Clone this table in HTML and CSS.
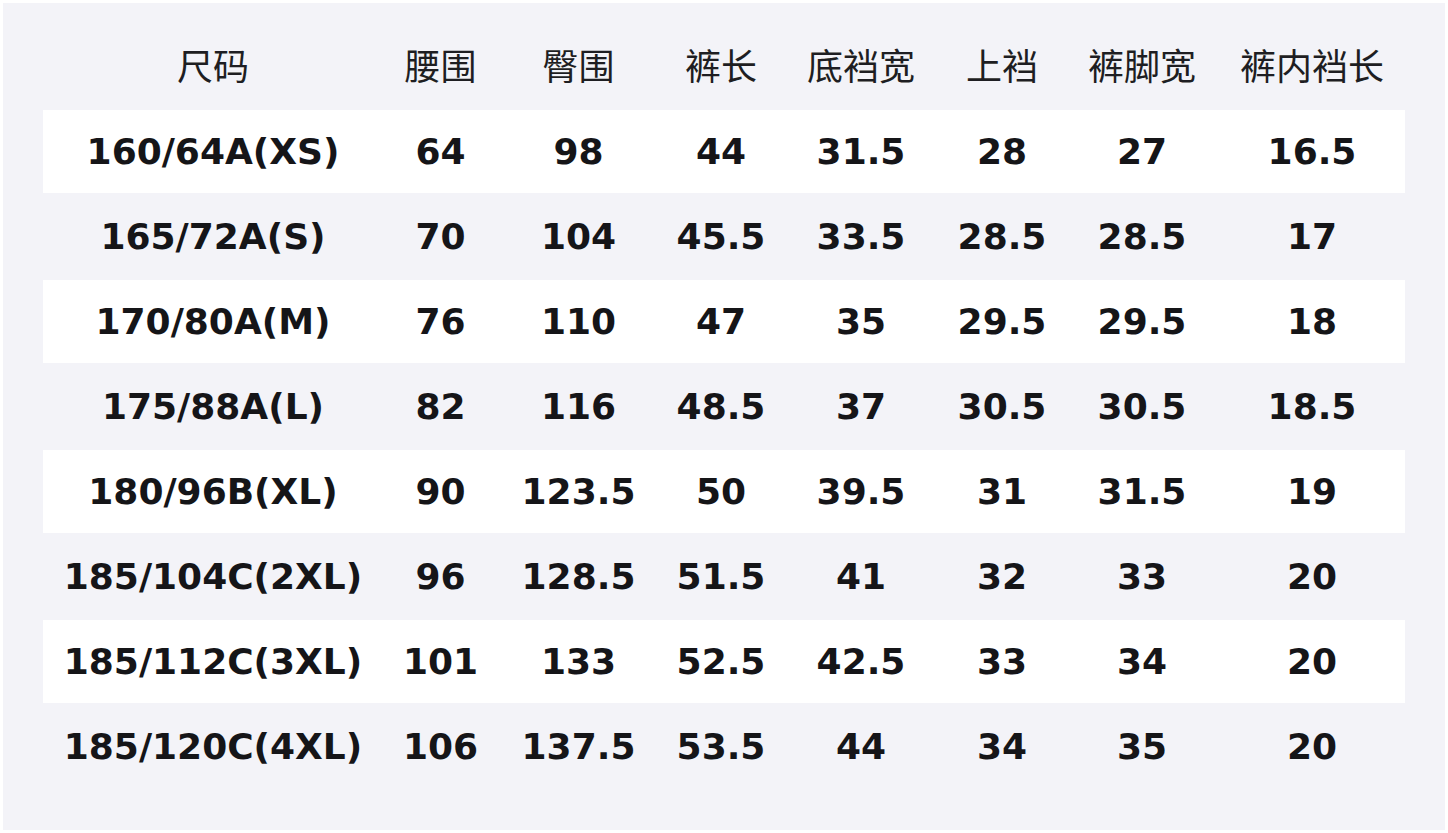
FILE: index.html
```html
<!DOCTYPE html>
<html lang="zh">
<head>
<meta charset="utf-8">
<title>尺码表</title>
<link rel="stylesheet" href="styles.css">
</head>
<body>
<div class="panel">
  <div class="table">
    <div class="row head">
      <div>尺码</div><div>腰围</div><div>臀围</div><div>裤长</div><div>底裆宽</div><div>上裆</div><div>裤脚宽</div><div>裤内裆长</div>
    </div>
    <div class="row odd"><div>160/64A(XS)</div><div>64</div><div>98</div><div>44</div><div>31.5</div><div>28</div><div>27</div><div>16.5</div></div>
    <div class="row"><div>165/72A(S)</div><div>70</div><div>104</div><div>45.5</div><div>33.5</div><div>28.5</div><div>28.5</div><div>17</div></div>
    <div class="row odd"><div>170/80A(M)</div><div>76</div><div>110</div><div>47</div><div>35</div><div>29.5</div><div>29.5</div><div>18</div></div>
    <div class="row"><div>175/88A(L)</div><div>82</div><div>116</div><div>48.5</div><div>37</div><div>30.5</div><div>30.5</div><div>18.5</div></div>
    <div class="row odd"><div>180/96B(XL)</div><div>90</div><div>123.5</div><div>50</div><div>39.5</div><div>31</div><div>31.5</div><div>19</div></div>
    <div class="row"><div>185/104C(2XL)</div><div>96</div><div>128.5</div><div>51.5</div><div>41</div><div>32</div><div>33</div><div>20</div></div>
    <div class="row odd"><div>185/112C(3XL)</div><div>101</div><div>133</div><div>52.5</div><div>42.5</div><div>33</div><div>34</div><div>20</div></div>
    <div class="row"><div>185/120C(4XL)</div><div>106</div><div>137.5</div><div>53.5</div><div>44</div><div>34</div><div>35</div><div>20</div></div>
  </div>
</div>
</body>
</html>
```
FILE: styles.css
```css
html, body {
  margin: 0;
  padding: 0;
  background: #ffffff;
}
body {
  padding: 3px;
  width: 1442px;
  height: 827px;
}
.panel {
  box-sizing: border-box;
  width: 1442px;
  height: 827px;
  background: #f3f3f8;
  padding: 22px 40px 0 40px;
}
.table {
  display: flex;
  flex-direction: column;
  gap: 2px;
}
.row {
  box-sizing: border-box;
  display: grid;
  grid-template-columns: 340px 115px 161px 124px 156px 126px 154px 186px;
  height: 83px;
  align-items: center;
  font-family: "DejaVu Sans", "Noto Sans CJK SC", sans-serif;
  font-weight: bold;
  font-size: 36px;
  color: #151518;
}
.row > div {
  text-align: center;
  white-space: nowrap;
}
.row.odd {
  background: #ffffff;
}
.row.head {
  font-family: "Noto Sans CJK SC", sans-serif;
  font-weight: normal;
  color: #1e1e22;
  padding-bottom: 6px;
}
```
